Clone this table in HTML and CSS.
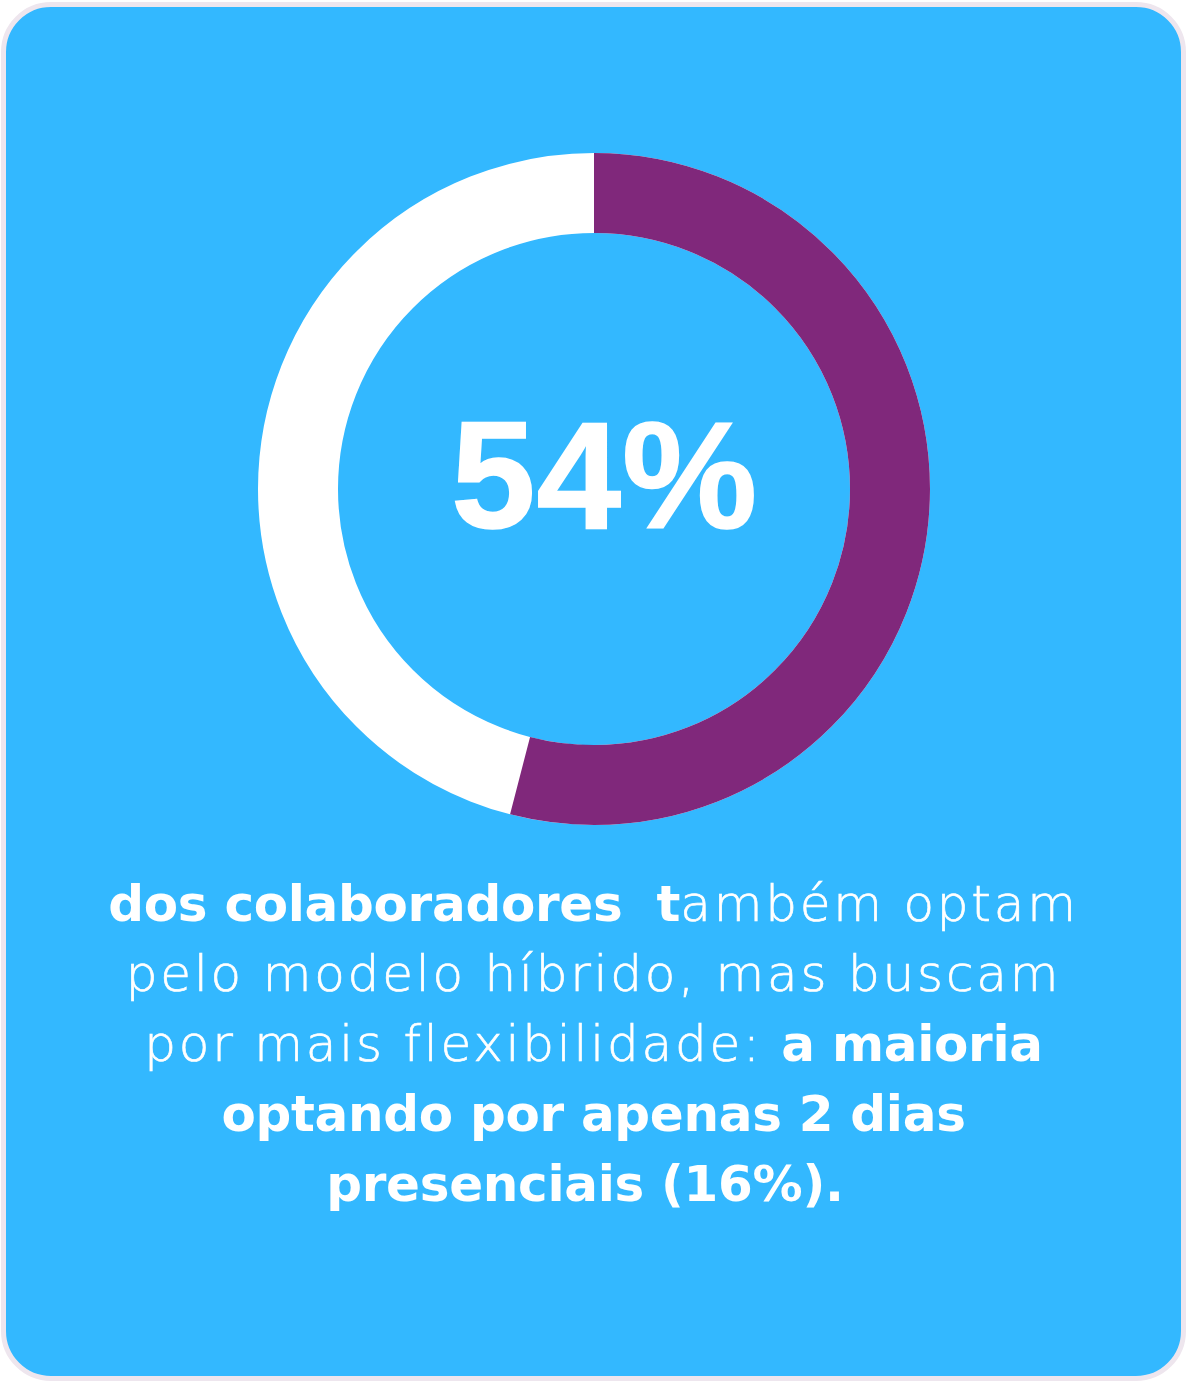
FILE: index.html
```
<!DOCTYPE html>
<html lang="pt-BR">
<head>
<meta charset="utf-8">
<title>54%</title>
<link rel="stylesheet" href="styles.css">
</head>
<body>
<div class="card">
  <div class="chart">
    <svg class="donut" width="672" height="672" viewBox="0 0 672 672">
      <circle cx="336" cy="336" r="296" fill="none" stroke="#ffffff" stroke-width="80"/>
      <circle cx="336" cy="336" r="296" fill="none" stroke="#80287b" stroke-width="80" stroke-dasharray="1004.3 2000" transform="rotate(-90 336 336)"/>
    </svg>
    <div class="value">54%</div>
  </div>
  <p class="desc">
    <span class="line"><b>dos colaboradores&nbsp; t</b>ambém optam</span>
    <span class="line">pelo modelo híbrido, mas buscam</span>
    <span class="line">por mais flexibilidade: <b>a maioria</b></span>
    <span class="line"><b>optando por apenas 2 dias</b></span>
    <span class="line"><b>presenciais (16%).&nbsp;</b></span>
  </p>
</div>
</body>
</html>
```
FILE: styles.css
```
html, body {
  margin: 0;
  padding: 0;
  background: #ffffff;
}
body {
  width: 1188px;
  height: 1383px;
}
.card {
  box-sizing: border-box;
  margin: 2px 0 0 1px;
  width: 1185px;
  height: 1379px;
  border: 5px solid #eee6ee;
  border-radius: 50px;
  background: #33b8ff;
  display: flex;
  flex-direction: column;
  align-items: center;
  padding-top: 146px;
}
.chart {
  display: grid;
  place-items: center;
  width: 672px;
  height: 672px;
}
.chart > * {
  grid-area: 1 / 1;
}
.donut {
  display: block;
}
.value {
  font-family: "Liberation Sans", "Inter", sans-serif;
  font-weight: 700;
  font-size: 152px;
  line-height: 1;
  color: #ffffff;
  margin: -29px 0 0 22px;
  letter-spacing: 1px;
  -webkit-text-stroke: 1.5px #ffffff;
}
.desc {
  margin: 44px 0 0 0;
  font-family: "DejaVu Sans", "Inter", sans-serif;
  font-weight: 200;
  font-size: 50px;
  line-height: 70px;
  letter-spacing: 2.8px;
  color: #ffffff;
  -webkit-text-stroke: 0.7px #ffffff;
  text-align: center;
  white-space: nowrap;
}
.desc .line {
  display: block;
}
.desc b {
  font-weight: 700;
  letter-spacing: -0.3px;
  -webkit-text-stroke: 0;
}
```
